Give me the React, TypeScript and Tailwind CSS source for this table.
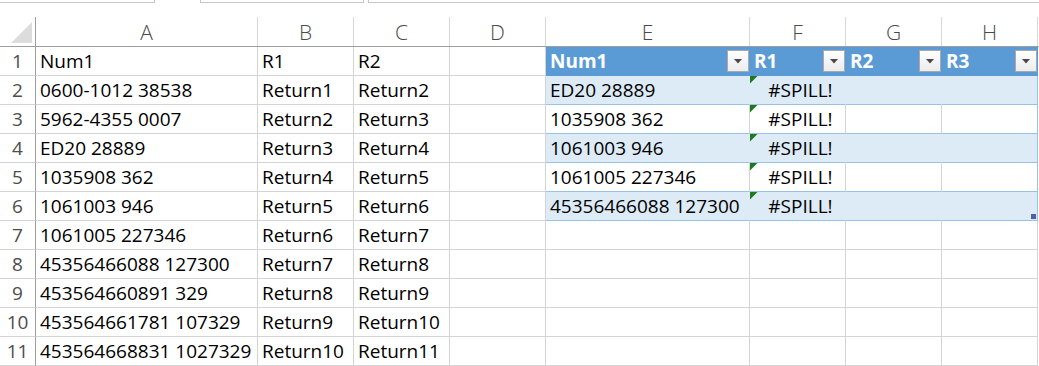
import React from "react";

type Col = { key: string; w: string };

const COLS: Col[] = [
  { key: "A", w: "w-[222px]" },
  { key: "B", w: "w-[96px]" },
  { key: "C", w: "w-[96px]" },
  { key: "D", w: "w-[96px]" },
  { key: "E", w: "w-[204px]" },
  { key: "F", w: "w-[96px]" },
  { key: "G", w: "w-[96px]" },
  { key: "H", w: "w-[96px]" },
];

const left: [string, string, string][] = [
  ["Num1", "R1", "R2"],
  ["0600-1012 38538", "Return1", "Return2"],
  ["5962-4355 0007", "Return2", "Return3"],
  ["ED20 28889", "Return3", "Return4"],
  ["1035908 362", "Return4", "Return5"],
  ["1061003 946", "Return5", "Return6"],
  ["1061005 227346", "Return6", "Return7"],
  ["45356466088 127300", "Return7", "Return8"],
  ["453564660891 329", "Return8", "Return9"],
  ["453564661781 107329", "Return9", "Return10"],
  ["453564668831 1027329", "Return10", "Return11"],
];

const tableBody = [
  "ED20 28889",
  "1035908 362",
  "1061003 946",
  "1061005 227346",
  "45356466088 127300",
];

function FilterButton() {
  return (
    <div className="flex h-[22px] w-[22px] shrink-0 items-center justify-center border border-[#a9a9a9] bg-gradient-to-b from-white to-[#ececec]">
      <svg width="8" height="5" viewBox="0 0 8 5">
        <path d="M0 0 H8 L4 4.5 Z" fill="#4a4a4a" />
      </svg>
    </div>
  );
}

function ErrorFlag() {
  return (
    <svg className="absolute left-0 top-0" width="8" height="8" viewBox="0 0 8 8">
      <path d="M0 0 H7.5 L0 7.5 Z" fill="#1e7a1e" />
    </svg>
  );
}

function RowHead({ n }: { n: number }) {
  return (
    <div className="flex h-[29px] w-[36px] shrink-0 items-center justify-center border-b border-r border-b-[#d4d4d4] border-r-[#9e9e9e] text-[19px] leading-[28px] text-[#4d4d4d]">
      {n}
    </div>
  );
}

function Cell({
  w,
  children,
  className = "",
}: {
  w: string;
  children?: React.ReactNode;
  className?: string;
}) {
  return (
    <div
      className={`relative flex h-[29px] shrink-0 items-center overflow-visible whitespace-nowrap border-b border-r pl-[4px] text-[19px] leading-[28px] text-black ${w} ${className}`}
    >
      {children}
    </div>
  );
}

export default function App() {
  return (
    <div className="h-[366px] w-[1039px] overflow-hidden bg-white font-['Open_Sans',sans-serif]">
      {/* name box / formula bar edges */}
      <div className="flex h-[3px]">
        <div className="w-[155px] border-b border-r border-[#c6c6c6]" />
        <div className="w-[45px]" />
        <div className="w-[164px] border-b border-l border-r border-[#c6c6c6]" />
        <div className="w-[4px]" />
        <div className="flex-1 border-b border-l border-[#c6c6c6]" />
      </div>
      <div className="h-[14px]" />

      {/* column headers */}
      <div className="flex h-[30px] border-b border-[#9e9e9e]">
        <div className="flex w-[36px] shrink-0 items-end justify-end border-r border-[#9e9e9e] pb-[3px] pr-[3px]">
          <svg width="21" height="21" viewBox="0 0 21 21">
            <path d="M21 0 V21 H0 Z" fill="#dcdcdc" />
          </svg>
        </div>
        {COLS.map((c) => (
          <div
            key={c.key}
            className={`flex shrink-0 items-center justify-center border-r border-[#d8d8d8] pt-[3px] text-[21px] font-light text-[#4a4a4a] ${c.w}`}
          >
            {c.key}
          </div>
        ))}
      </div>

      {/* rows */}
      {left.map((r, i) => {
        const rowNo = i + 1;
        const isHeader = rowNo === 1;
        const bodyIdx = rowNo - 2;
        const inTable = bodyIdx >= 0 && bodyIdx < tableBody.length;
        const banded = inTable && bodyIdx % 2 === 0;
        const grid = "border-[#d4d4d4]";
        return (
          <div key={rowNo} className="flex">
            <RowHead n={rowNo} />
            <Cell w="w-[222px]" className={grid}>
              {r[0]}
            </Cell>
            <Cell w="w-[96px]" className={grid}>
              {r[1]}
            </Cell>
            <Cell w="w-[96px]" className={grid}>
              {r[2]}
            </Cell>
            <Cell w="w-[96px]" className={grid} />
            {isHeader ? (
              <>
                {["Num1", "R1", "R2", "R3"].map((h, k) => (
                  <div
                    key={h}
                    className={`flex h-[29px] shrink-0 items-center justify-between border-b border-r border-[#5b9bd5] bg-[#5b9bd5] pl-[4px] text-[19px] font-bold leading-[28px] text-white ${
                      k === 0 ? "w-[204px]" : "w-[96px]"
                    }`}
                  >
                    <span>{h}</span>
                    <FilterButton />
                  </div>
                ))}
              </>
            ) : inTable ? (
              <>
                <Cell
                  w="w-[204px]"
                  className={
                    banded
                      ? "border-b-[#9bc2e6] border-r-[#ddebf7] bg-[#ddebf7]"
                      : "border-b-[#9bc2e6] border-r-[#d4d4d4]"
                  }
                >
                  {tableBody[bodyIdx]}
                </Cell>
                <Cell
                  w="w-[96px]"
                  className={`justify-center pl-0 ${
                    banded
                      ? "border-b-[#9bc2e6] border-r-[#ddebf7] bg-[#ddebf7]"
                      : "border-b-[#9bc2e6] border-r-[#d4d4d4]"
                  }`}
                >
                  <ErrorFlag />
                  <span className="pl-[2px]">#SPILL!</span>
                </Cell>
                <Cell
                  w="w-[96px]"
                  className={
                    banded
                      ? "border-b-[#9bc2e6] border-r-[#ddebf7] bg-[#ddebf7]"
                      : "border-b-[#9bc2e6] border-r-[#d4d4d4]"
                  }
                />
                <Cell
                  w="w-[96px]"
                  className={`border-b-[#9bc2e6] border-r-[#9bc2e6] ${
                    banded ? "bg-[#ddebf7]" : ""
                  }`}
                >
                  {bodyIdx === tableBody.length - 1 && (
                    <div className="absolute bottom-[1px] right-[1px] h-[5px] w-[5px] bg-[#4f5fa8]" />
                  )}
                </Cell>
              </>
            ) : (
              <>
                <Cell w="w-[204px]" className={grid} />
                <Cell w="w-[96px]" className={grid} />
                <Cell w="w-[96px]" className={grid} />
                <Cell w="w-[96px]" className={grid} />
              </>
            )}
          </div>
        );
      })}
    </div>
  );
}
